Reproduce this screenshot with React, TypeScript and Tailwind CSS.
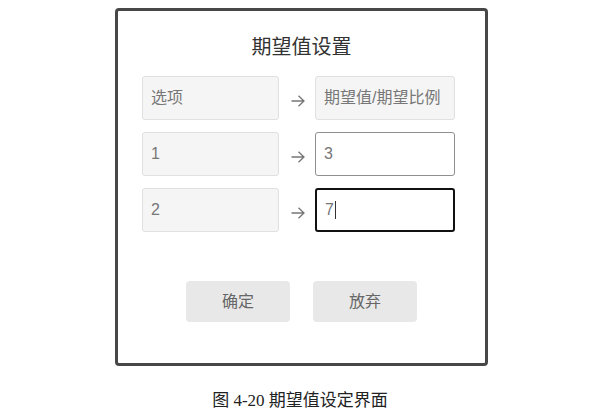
const sans = "font-['Liberation_Sans','Noto_Sans_CJK_SC',sans-serif]";

function Cell({ text, variant }: { text: string; variant: "gray" | "plain" | "active" }) {
  const look =
    variant === "gray"
      ? "bg-[#f5f5f5] border border-[#e0e0e0]"
      : variant === "plain"
      ? "bg-white border border-[#8f8f8f]"
      : "bg-white border-2 border-[#111] pl-[7px]";
  return (
    <div className={`h-[44px] rounded-[3px] flex items-center pl-[8px] text-[16px] text-[#777] ${look}`}>
      {text}
      {variant === "active" && <span className="inline-block w-px h-[18px] bg-[#333] ml-px" />}
    </div>
  );
}

function Arrow() {
  return (
    <svg width="14" height="12" viewBox="0 0 14 12" className="mt-[6px]">
      <path d="M0.5 6H13M7.5 0.8L13 6L7.5 11.2" fill="none" stroke="#777" strokeWidth="1.3" />
    </svg>
  );
}

export default function App() {
  const rows: { left: string; right: string; variant: "gray" | "plain" | "active" }[] = [
    { left: "选项", right: "期望值/期望比例", variant: "gray" },
    { left: "1", right: "3", variant: "plain" },
    { left: "2", right: "7", variant: "active" },
  ];

  return (
    <div className={`w-[600px] h-[415px] bg-white pt-[8px] ${sans}`}>
      <div className="ml-[115px] w-[373px] h-[358px] border-[3px] border-[#474747] rounded-[4px] flex flex-col">
        <div className="pt-[22px] h-[50px] text-center text-[20px] leading-[28px] text-[#333]">
          期望值设置
        </div>

        <div className="mt-[15px] pl-[24px] flex flex-col gap-[12px]">
          {rows.map((r) => (
            <div key={r.left} className="grid grid-cols-[137px_36px_140px] items-center">
              <Cell text={r.left} variant="gray" />
              <div className="flex justify-center pl-[1px]">
                <Arrow />
              </div>
              <Cell text={r.right} variant={r.variant} />
            </div>
          ))}
        </div>

        <div className="mt-[49px] flex justify-center gap-[23px]">
          <button className="w-[104px] h-[41px] rounded-[4px] bg-[#e8e8e8] text-[16px] text-[#666]">确定</button>
          <button className="w-[104px] h-[41px] rounded-[4px] bg-[#e8e8e8] text-[16px] text-[#666]">放弃</button>
        </div>
      </div>

      <div className="mt-[24px] text-center text-[17px] leading-[22px] text-[#222] font-['Liberation_Serif','Noto_Sans_CJK_SC',serif]">
        图 4-20 期望值设定界面
      </div>
    </div>
  );
}
